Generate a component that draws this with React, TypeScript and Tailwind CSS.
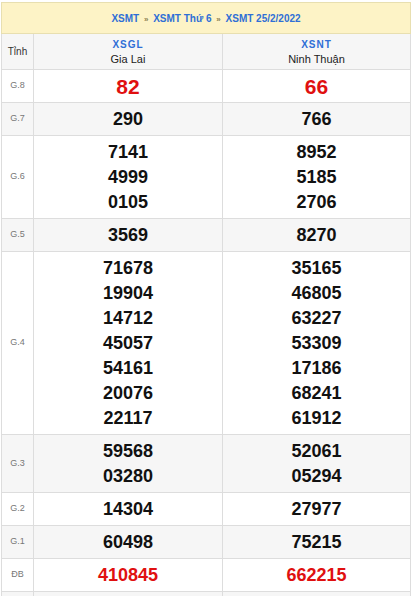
import React from "react";

interface Prize {
  label: string;
  left: string[];
  right: string[];
  red?: boolean;
  big?: boolean;
}

const prizes: Prize[] = [
  { label: "G.8", left: ["82"], right: ["66"], red: true, big: true },
  { label: "G.7", left: ["290"], right: ["766"] },
  { label: "G.6", left: ["7141", "4999", "0105"], right: ["8952", "5185", "2706"] },
  { label: "G.5", left: ["3569"], right: ["8270"] },
  {
    label: "G.4",
    left: ["71678", "19904", "14712", "45057", "54161", "20076", "22117"],
    right: ["35165", "46805", "63227", "53309", "17186", "68241", "61912"],
  },
  { label: "G.3", left: ["59568", "03280"], right: ["52061", "05294"] },
  { label: "G.2", left: ["14304"], right: ["27977"] },
  { label: "G.1", left: ["60498"], right: ["75215"] },
  { label: "ĐB", left: ["410845"], right: ["662215"], red: true },
];

const NumCell = ({ nums, red, big }: { nums: string[]; red?: boolean; big?: boolean }) => (
  <td className="border border-[#dddddd] text-center py-[3.5px] align-middle">
    {nums.map((n) => (
      <div
        key={n}
        className={`font-bold leading-[25px] ${big ? "text-[21px]" : "text-[18px]"} ${
          red ? "text-[#e01010]" : "text-[#111111]"
        }`}
      >
        {n}
      </div>
    ))}
  </td>
);

export default function App() {
  return (
    <div className="w-[412px] h-[596px] overflow-hidden bg-white pt-[2px] pl-[1px] font-['Liberation_Sans',Arial,sans-serif]">
      <table className="w-[410px] border-collapse table-fixed">
        <colgroup>
          <col className="w-[32px]" />
          <col className="w-[189px]" />
          <col />
        </colgroup>
        <thead>
          <tr>
            <th
              colSpan={3}
              className="border border-[#e8dfb0] bg-[#fdf3c6] h-[31px] text-center text-[10px] font-bold text-[#2f6fd6]"
            >
              XSMT <span className="text-[#8a8050] text-[8px] mx-[2px]">»</span> XSMT Thứ 6{" "}
              <span className="text-[#8a8050] text-[8px] mx-[2px]">»</span> XSMT 25/2/2022
            </th>
          </tr>
        </thead>
        <tbody>
          <tr className="bg-[#f6f6f6]">
            <td className="border border-[#dddddd] text-center text-[10px] text-[#333333] h-[36px]">
              Tỉnh
            </td>
            <td className="border border-[#dddddd] text-center leading-[15px]">
              <div className="text-[10px] font-bold text-[#2f6fd6] tracking-[1px]">XSGL</div>
              <div className="text-[11px] text-[#222222]">Gia Lai</div>
            </td>
            <td className="border border-[#dddddd] text-center leading-[15px]">
              <div className="text-[10px] font-bold text-[#2f6fd6] tracking-[1px]">XSNT</div>
              <div className="text-[11px] text-[#222222]">Ninh Thuận</div>
            </td>
          </tr>
          {prizes.map((p, i) => (
            <tr key={p.label} className={i % 2 === 1 ? "bg-[#f6f6f6]" : "bg-white"}>
              <td className="border border-[#dddddd] text-center text-[9px] text-[#777777]">
                {p.label}
              </td>
              <NumCell nums={p.left} red={p.red} big={p.big} />
              <NumCell nums={p.right} red={p.red} big={p.big} />
            </tr>
          ))}
          <tr className="bg-[#f6f6f6]">
            <td className="border border-[#dddddd] h-[20px]"></td>
            <td className="border border-[#dddddd]"></td>
            <td className="border border-[#dddddd]"></td>
          </tr>
        </tbody>
      </table>
    </div>
  );
}
